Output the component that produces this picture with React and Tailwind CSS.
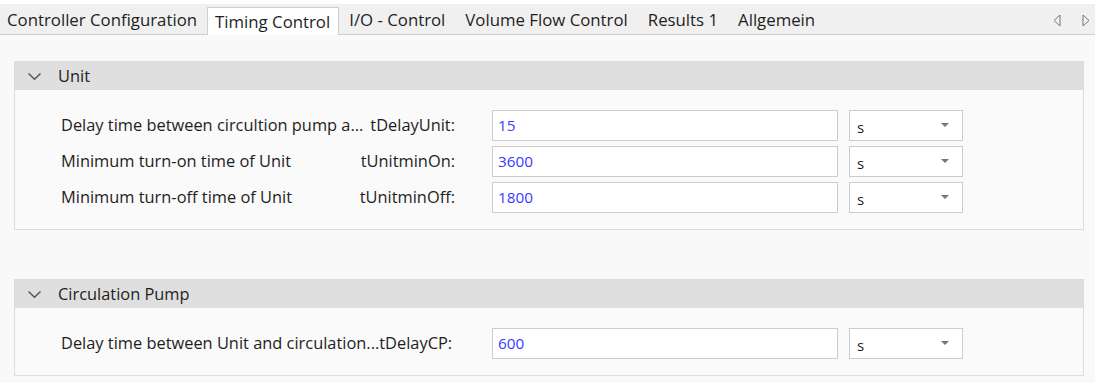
import React from 'react';

const tabs = ['Controller Configuration', 'Timing Control', 'I/O - Control', 'Volume Flow Control', 'Results 1', 'Allgemein'];

const Chevron = () => (
    <svg width="15" height="9" viewBox="0 0 15 9" className="text-[#555]">
        <path d="M1.5 1.5 L7.5 7.2 L13.5 1.5" fill="none" stroke="currentColor" strokeWidth="1.5" />
    </svg>
);

const Row = ({ desc, name, value }) => (
    <div className="flex items-center h-[31px]">
        <div className="w-[394px] flex items-center justify-between whitespace-nowrap overflow-hidden">
            <span>{desc}</span>
            {name && <span>{name}</span>}
        </div>
        <div className="ml-[37px] w-[346px] h-[31px] bg-white border border-[#cccccc] flex items-center px-[5px] text-[15.3px] text-[#3a3aff]">
            {value}
        </div>
        <div className="ml-[11px] w-[114px] h-[31px] bg-white border border-[#cccccc] flex items-center justify-between pl-[7px] pr-[13px]">
            <span className="pt-[3px] text-[15px]">s</span>
            <svg width="8" height="5" viewBox="0 0 8 5"><path d="M0 0 L8 0 L4 4 Z" fill="#777" /></svg>
        </div>
    </div>
);

const Section = ({ title, children }) => (
    <div className="ml-[14px] mr-[11px] border border-[#dddddd] bg-[#fafafa]">
        <div className="h-[28px] bg-[#dfdfdf] flex items-center pl-[12px] gap-[16px]">
            <Chevron />
            <span>{title}</span>
        </div>
        <div className="pl-[46px] pt-[20px] pb-[16px] flex flex-col gap-[5px]">{children}</div>
    </div>
);

const App = () => {
    return (
        <div className="w-[1095px] h-[383px] bg-[#f9f9f9] text-[16.4px] text-[#1e1e1e] overflow-hidden" style={{ fontFamily: '"Open Sans", "Noto Sans", sans-serif' }}>
            {/* tab strip */}
            <div className="h-[35px] bg-white pt-[4px]">
                <div className="h-[31px] bg-[#f0f0f0] border-b border-[#cfcfcf] flex items-end -ml-[3px] text-[16.8px]">
                    {tabs.map((t) => t === 'Timing Control' ? (
                        <div key={t} className="h-[28px] pl-[7px] pr-[8px] bg-white border border-b-0 border-[#cfcfcf] -mb-px flex items-center">{t}</div>
                    ) : (
                        <div key={t} className="h-[28px] px-[10px] flex items-center">{t}</div>
                    ))}
                    <div className="ml-auto flex items-center gap-[21px] h-[28px] pr-[5px] text-[#777]">
                        <svg width="8" height="13" viewBox="0 0 8 13"><path d="M7 1 L1 6.5 L7 12 Z" fill="none" stroke="currentColor" strokeWidth="1" /></svg>
                        <svg width="8" height="13" viewBox="0 0 8 13"><path d="M1 1 L7 6.5 L1 12 Z" fill="none" stroke="currentColor" strokeWidth="1" /></svg>
                    </div>
                </div>
            </div>
            <div className="pt-[26px] flex flex-col gap-[49px]">
                <Section title="Unit">
                    <Row desc="Delay time between circultion pump a..." name="tDelayUnit:" value="15" />
                    <Row desc="Minimum turn-on time of Unit" name="tUnitminOn:" value="3600" />
                    <Row desc="Minimum turn-off time of Unit" name="tUnitminOff:" value="1800" />
                </Section>
                <Section title="Circulation Pump">
                    <Row desc="Delay time between Unit and circulation...tDelayCP:" value="600" />
                </Section>
            </div>
        </div>
    );
};

export default App;
